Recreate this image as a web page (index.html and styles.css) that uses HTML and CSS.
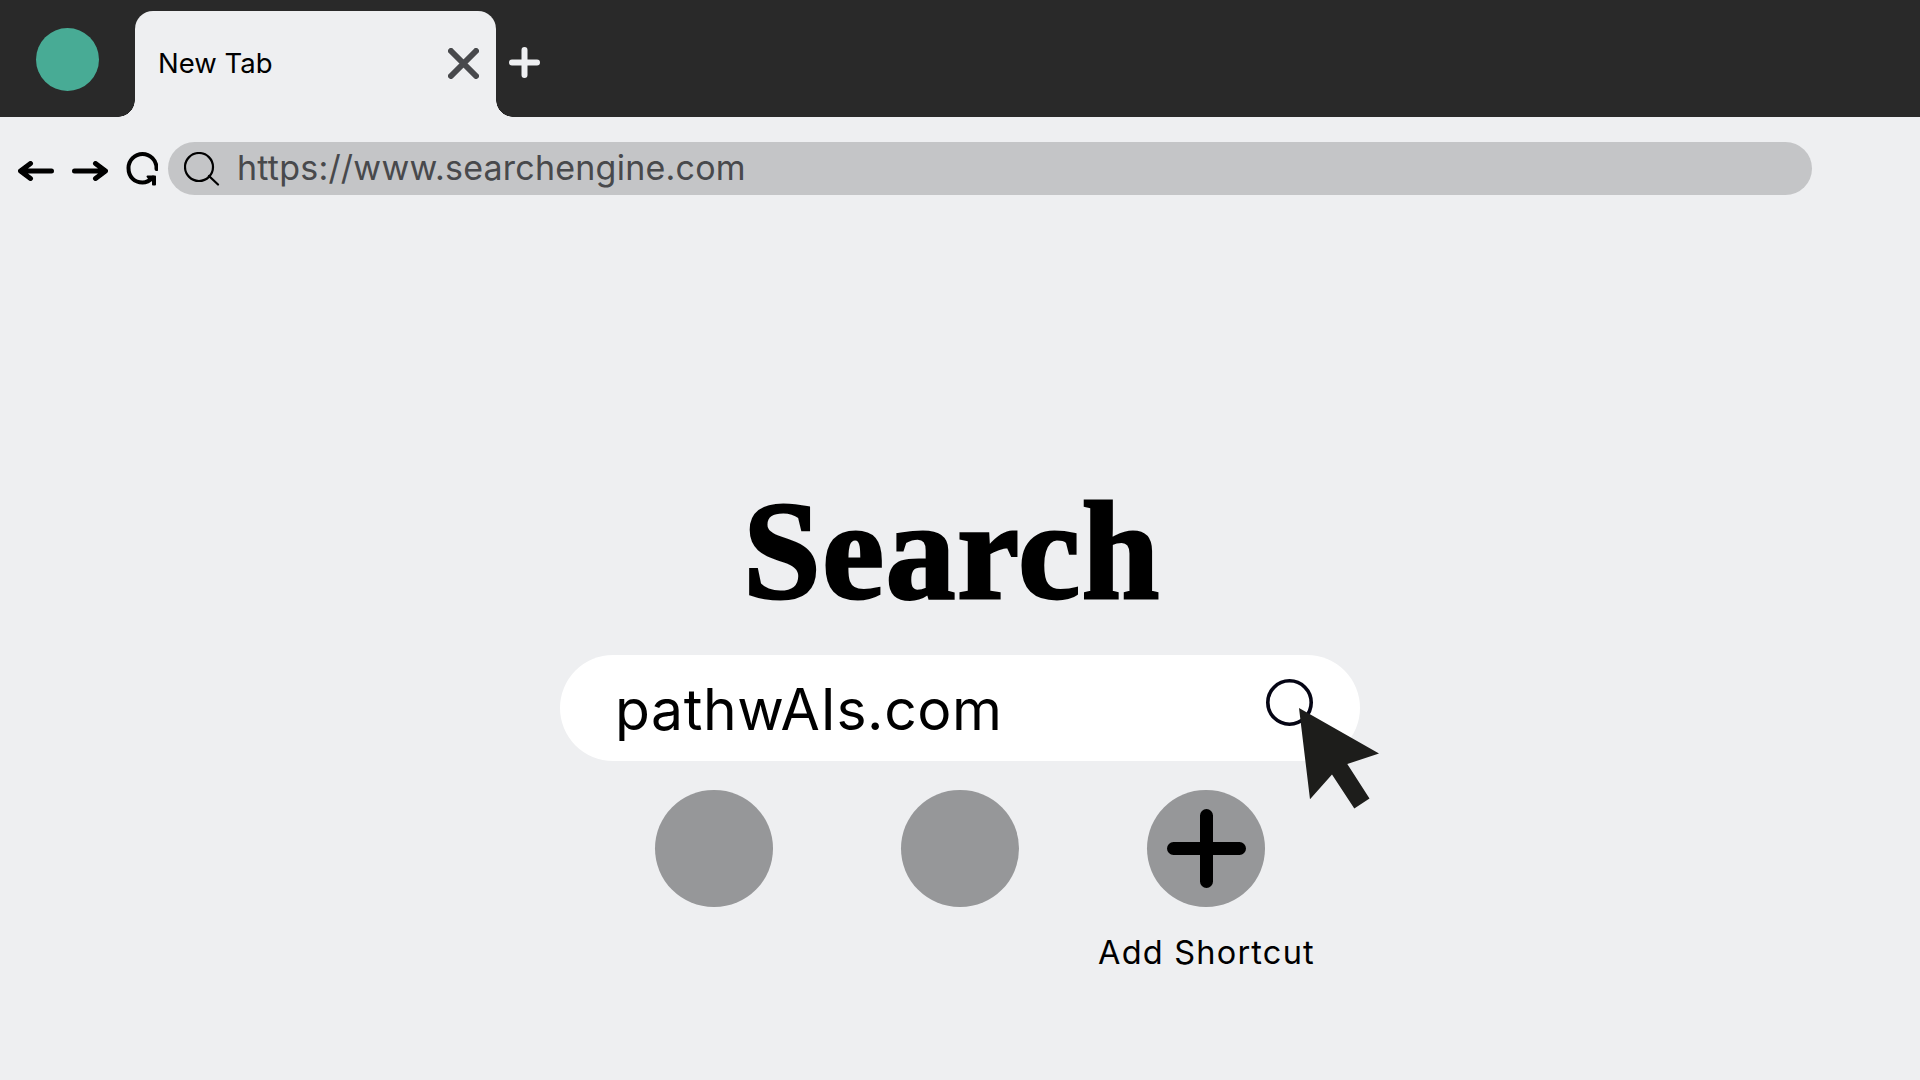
FILE: index.html
```html
<!DOCTYPE html>
<html lang="en">

<head>
    <meta charset="UTF-8">
    <meta name="viewport" content="width=device-width, initial-scale=1.0">
    <title>New Tab</title>
    <link rel="stylesheet" href="styles.css">
</head>

<body>

    <!-- Tab strip -->
    <header class="tab-strip">
        <div class="profile"></div>
        <div class="tab">
            <span class="tab-title">New Tab</span>
            <svg class="tab-close" viewBox="0 0 31 31">
                <path d="M3 3L28 28M28 3L3 28" />
            </svg>
        </div>
        <svg class="new-tab" viewBox="0 0 31 31">
            <path d="M15.5 3V28M3 15.5H28" />
        </svg>
    </header>

    <!-- Navigation and address bar -->
    <nav class="toolbar">
        <svg class="arrow" viewBox="0 0 36 20">
            <path d="M33.5 10H3M12.5 2.500L2.500 10L12.500 17.500" />
        </svg>
        <svg class="arrow" viewBox="0 0 36 20">
            <path d="M2.500 10H33M23.500 2.500L33.500 10L23.500 17.500" />
        </svg>
        <svg class="reload" viewBox="0 0 32 34">
            <path class="ring" d="M30.500 17V16A14 14 0 0 0 2.500 16C2.500 25 8.500 30.500 16.500 30.500C20.500 30.500 23.500 29 27 25.500" />
            <path class="head" d="M21.500 24.500H29V32.500H27V28L24 28Z" />
        </svg>
        <div class="address-bar">
            <svg class="address-icon" viewBox="0 0 36 34">
                <circle cx="15" cy="15" r="14" />
                <path d="M25 24L34 32.500" />
            </svg>
            <span class="address">https://www.searchengine.com</span>
        </div>
    </nav>

    <main class="page">
        <h1 class="logo">Search</h1>
        <div class="search-box">
            <span class="query">pathwAIs.com</span>
            <svg class="search-icon" viewBox="0 0 60 60">
                <circle cx="23.500" cy="23.500" r="21.700" />
                <path d="M39 39L56 56" />
            </svg>
            <svg class="cursor" viewBox="0 0 80 101">
                <path d="M0 0L80 45.500L48.300 56L70.500 90.500L55.300 100.500L33 66.500L11 91.300Z" />
            </svg>
        </div>
        <div class="shortcuts">
            <div class="shortcut"></div>
            <div class="shortcut"></div>
            <div class="shortcut">
                <svg class="plus" viewBox="0 0 79 79">
                    <path d="M39.500 6.500V72.500M6.500 39.500H72.500" />
                </svg>
            </div>
        </div>
        <p class="shortcut-label">Add Shortcut</p>
    </main>

</body>

</html>
```
FILE: styles.css
```css
* {
    box-sizing: border-box;
}

body {
    margin: 0;
    height: 100vh;
    overflow: hidden;
    background-color: #eeeff1;
    color: #000;
    font-family: Inter, "Liberation Sans", sans-serif;
}

svg {
    display: block;
    flex: none;
    fill: none;
    stroke: #000;
    stroke-linecap: round;
    stroke-linejoin: round;
}

/* Tab strip */
.tab-strip {
    display: flex;
    align-items: flex-end;
    height: 117px;
    padding-left: 36px;
    background-color: #292929;
}

.profile {
    width: 63px;
    height: 63px;
    margin: 0 36px 26px 0;
    border-radius: 50%;
    background-color: #48ab95;
}

.tab {
    position: relative;
    display: flex;
    align-items: center;
    justify-content: space-between;
    width: 361px;
    height: 106px;
    padding: 0 17px 2px 23px;
    border-radius: 18px 18px 0 0;
    background-color: #eeeff1;
}

/* Curved feet on both sides of the tab */
.tab::before,
.tab::after {
    content: "";
    position: absolute;
    bottom: 0;
    width: 17px;
    height: 17px;
}

.tab::before {
    right: 100%;
    background: radial-gradient(circle at 0 0, transparent 16.5px, #eeeff1 17px);
}

.tab::after {
    left: 100%;
    background: radial-gradient(circle at 100% 0, transparent 16.5px, #eeeff1 17px);
}

.tab-title {
    font-size: 27.5px;
    line-height: 34px;
}

.tab-close {
    width: 31px;
    height: 31px;
    stroke: #48494c;
    stroke-width: 6;
}

.new-tab {
    width: 31px;
    height: 31px;
    margin: 0 0 39px 12.5px;
    stroke: #eeeff1;
    stroke-width: 6;
}

/* Toolbar */
.toolbar {
    display: flex;
    align-items: center;
    height: 103px;
    padding: 0 108px 0 18px;
}

.arrow {
    width: 36px;
    height: 20px;
    margin: 4px 18px 0 0;
    stroke-width: 5;
}

.reload {
    width: 32px;
    height: 34px;
    margin-right: 10px;
}

.ring {
    stroke-width: 4;
}

.head {
    fill: #000;
    stroke-width: 2;
}

.address-bar {
    display: flex;
    flex: 1;
    align-items: center;
    height: 53px;
    padding-left: 16px;
    border-radius: 27px;
    background-color: #c4c5c7;
}

.address-icon {
    width: 36px;
    height: 34px;
    stroke-width: 2.2;
}

.address {
    margin-left: 17px;
    padding-bottom: 2px;
    color: #48494c;
    font-size: 34px;
    line-height: 40px;
    letter-spacing: 0.22px;
}

/* Search page */
.page {
    display: flex;
    flex-direction: column;
    align-items: center;
}

.logo {
    margin: 251px 0 0;
    padding-right: 16px;
    font-family: "Liberation Serif", serif;
    font-size: 139px;
    line-height: 160px;
    letter-spacing: 1.8px;
    -webkit-text-stroke: 3px #000;
}

.search-box {
    position: relative;
    display: flex;
    align-items: center;
    justify-content: space-between;
    width: 800px;
    height: 106px;
    margin-top: 24px;
    padding: 0 34px 0 55px;
    border-radius: 53px;
    background-color: #fff;
}

.query {
    padding-top: 3px;
    font-size: 57px;
    line-height: 70px;
    letter-spacing: 0.6px;
}

.search-icon {
    width: 60px;
    height: 60px;
    margin-top: 1px;
    stroke: #050514;
    stroke-width: 3.6;
}

/* Mouse pointer lying over the search icon */
.cursor {
    position: absolute;
    top: 53px;
    left: 739px;
    width: 80px;
    height: 101px;
    fill: #1d1d1b;
    stroke: none;
}

.shortcuts {
    display: flex;
    gap: 128.5px;
    margin-top: 28.5px;
}

.shortcut {
    display: flex;
    align-items: center;
    justify-content: center;
    width: 117.5px;
    height: 117.5px;
    border-radius: 50%;
    background-color: #969799;
}

.plus {
    width: 79px;
    height: 79px;
    stroke-width: 13;
}

.shortcut-label {
    margin: 26px 0 0 493px;
    font-size: 32.5px;
    line-height: 40px;
    letter-spacing: 1.2px;
}
```
